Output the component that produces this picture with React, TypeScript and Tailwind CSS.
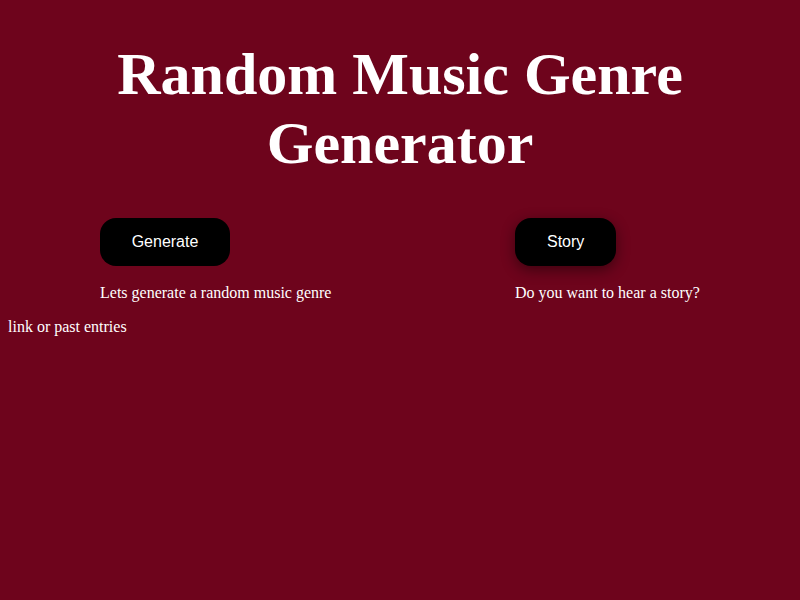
export default function App() {
  return (
    <div className="min-h-[600px] w-full bg-[#6e041c] text-white font-['Liberation_Serif',serif] overflow-hidden">
      <h1 className="pt-10 mb-10 text-center text-[60px] leading-[69px] font-bold">
        Random Music Genre
        <br />
        Generator
      </h1>

      <div className="flex pl-[100px]">
        <div className="w-[415px]">
          <button className="h-12 w-[130px] rounded-2xl bg-black text-white text-base font-['Liberation_Sans',sans-serif]">
            Generate
          </button>
          <p className="mt-[18px] text-base leading-[18px]">Lets generate a random music genre</p>
        </div>

        <div>
          <button className="h-12 px-8 rounded-2xl bg-black text-white text-base font-['Liberation_Sans',sans-serif] shadow-[0_4px_14px_rgba(0,0,0,0.45)]">
            Story
          </button>
          <p className="mt-[18px] text-base leading-[18px]">Do you want to hear a story?</p>
        </div>
      </div>

      <p className="mt-4 pl-2 text-base leading-[18px]">link or past entries</p>
    </div>
  )
}
